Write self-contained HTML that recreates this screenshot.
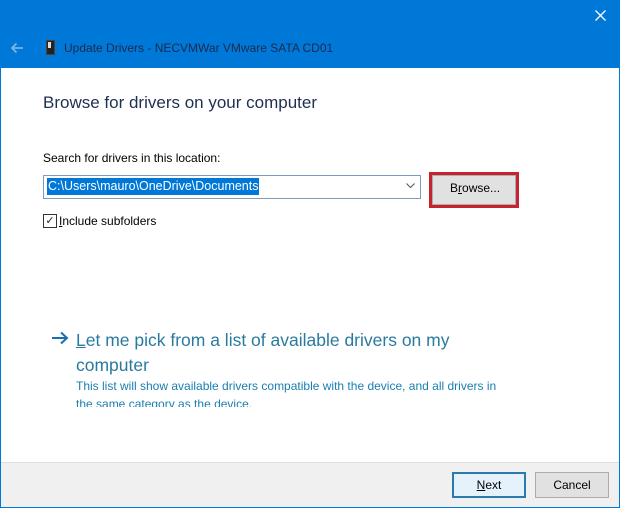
<!DOCTYPE html>
<html><head><style>
body{margin:0;width:620px;height:508px;overflow:hidden;background:#0078d7;font-family:"Liberation Sans",sans-serif;position:relative}
.a{position:absolute}
</style></head><body>
<svg class="a" style="left:595px;top:10px" width="11" height="11"><path d="M0.5 0.5L10.5 10.5M10.5 0.5L0.5 10.5" stroke="#fff" stroke-width="1.3"/></svg>
<svg class="a" style="left:10px;top:42px" width="14" height="12"><path d="M13 6H2M6.5 1.5L2 6L6.5 10.5" stroke="#7fb1e3" stroke-width="1.8" fill="none"/></svg>
<div class="a" style="left:46px;top:40px;width:7px;height:13px;background:#222;border:1px solid #444;"></div>
<div class="a" style="left:48px;top:42px;width:3px;height:6px;background:#ddd"></div>
<div class="a" style="left:64px;top:41px;color:#1a2a50;font-size:12px;">Update Drivers - NECVMWar VMware SATA CD01</div>
<div class="a" style="left:1px;top:68px;width:618px;height:394px;background:#fff"></div>
<div class="a" style="left:1px;top:462px;width:618px;height:44px;background:#f0f0f0;border-top:1px solid #dfdfdf"></div>
<div class="a" style="left:43px;top:93px;color:#1e3050;font-size:17px;">Browse for drivers on your computer</div>
<div class="a" style="left:43px;top:151px;color:#000;font-size:12px;">Search for drivers in this location:</div>
<div class="a" style="left:43px;top:175px;width:376px;height:22px;border:1px solid #7a9cc0;background:#fff"></div>
<div class="a" style="left:47px;top:178px;height:17px;background:#0078d7;color:#fff;font-size:12.5px;line-height:17px;padding:0 1px;">C:\Users\mauro\OneDrive\Documents</div>
<svg class="a" style="left:406px;top:183px" width="9" height="6"><path d="M0.5 0.5L4.5 4.5L8.5 0.5" stroke="#555" fill="none"/></svg>
<div class="a" style="left:429px;top:172px;width:84px;height:30px;border:3px solid #c4232f;background:#e1e1e1;box-shadow:inset 0 0 0 1px #adadad"></div>
<div class="a" style="left:450px;top:181px;color:#000;font-size:12px;">B<u>r</u>owse...</div>
<div class="a" style="left:43px;top:214px;width:12px;height:12px;border:1px solid #333;background:#fff;font-size:11px;line-height:12px;text-align:center;color:#222">✓</div>
<div class="a" style="left:59px;top:214px;color:#000;font-size:12px;"><u>I</u>nclude subfolders</div>
<svg class="a" style="left:51px;top:331px" width="18" height="14"><path d="M1 7H16M10 1.5L16 7L10 12.5" stroke="#1a6fb0" stroke-width="2" fill="none"/></svg>
<div class="a" style="left:76px;top:328px;color:#2a7aa0;font-size:17.5px;line-height:25px;width:420px;"><u>L</u>et me pick from a list of available drivers on my computer</div>
<div class="a" style="left:76px;top:378px;color:#1a7fb0;font-size:12px;line-height:16px;width:470px;height:29px;overflow:hidden;">This list will show available drivers compatible with the device, and all drivers in<br><span style="position:relative;top:2px">the same category as the device.</span></div>
<div class="a" style="left:452px;top:472px;width:70px;height:22px;border:2px solid #2a7ab0;background:#e5f1fb;font-size:12px;text-align:center;line-height:22px"><u>N</u>ext</div>
<div class="a" style="left:535px;top:472px;width:72px;height:24px;border:1px solid #adadad;background:#e1e1e1;font-size:12px;text-align:center;line-height:24px">Cancel</div>
</body></html>
